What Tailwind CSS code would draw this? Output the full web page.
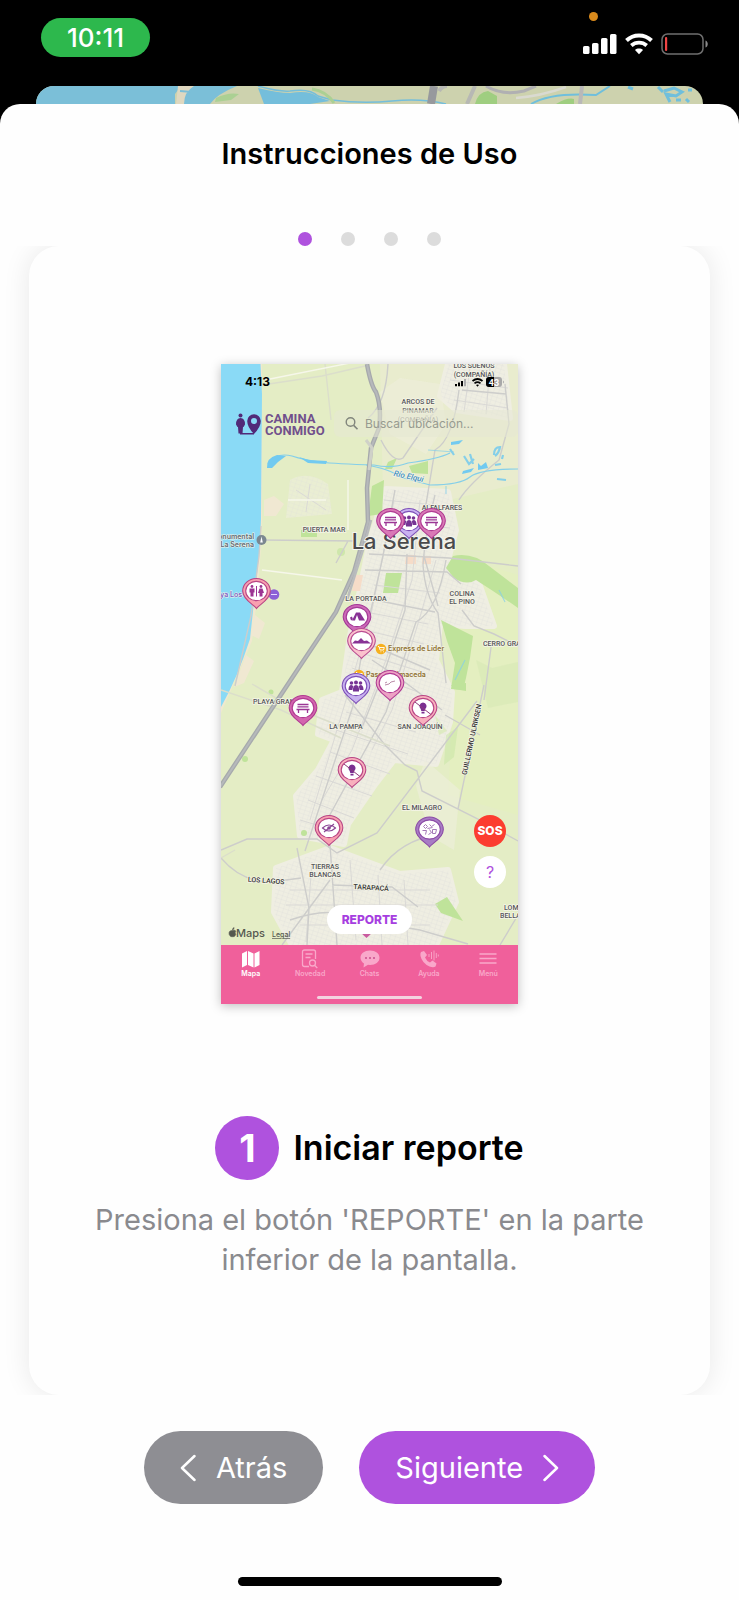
<!DOCTYPE html>
<html lang="es">
<head>
<meta charset="utf-8">
<meta name="viewport" content="width=device-width, initial-scale=1">
<title>Instrucciones de Uso</title>
<script src="https://cdn.jsdelivr.net/npm/@tailwindcss/browser@4"></script>
</head>
<body class="flex min-h-screen flex-col bg-black font-['Inter',sans-serif] text-black">

<!-- Status bar -->
<header class="relative flex h-[86px] shrink-0 items-start justify-between pt-[18px] pr-[30px] pl-[41px]">
  <div class="flex h-[39px] w-[109px] items-center justify-center rounded-full bg-[#2db84d] text-[26px] font-medium text-white">10:11</div>
  <div class="flex items-center gap-2 pt-[15px]">
    <svg class="h-[22px] w-[34px]" viewBox="0 0 34 22" fill="#fff" role="img" aria-label="Señal"><rect x="0" y="13" width="6.5" height="8" rx="1.6"/><rect x="9" y="10" width="6.5" height="11" rx="1.6"/><rect x="18" y="5" width="6.5" height="16" rx="1.6"/><rect x="27" y="1" width="6.5" height="20" rx="1.6"/></svg>
    <svg class="h-[22px] w-7" viewBox="0 0 28 22" fill="none" stroke="#fff" role="img" aria-label="Wi-Fi"><path d="M1.5 7.5C8.5.8 19.500.8 26.500 7.500" stroke-width="4"/><path d="M6.300 12.500C10.700 8.600 17.300 8.600 21.700 12.500" stroke-width="3.800"/><path d="M10 17c2.200-1.900 5.800-1.900 8 0l-4 4.200z" fill="#fff" stroke="none"/></svg>
    <svg class="h-[22px] w-12" viewBox="0 0 48 22" fill="none" role="img" aria-label="Batería baja"><rect x="1" y="1" width="41" height="20" rx="5.500" stroke="#6f6f6f" stroke-width="1.500"/><path d="M44.500 7.500c3 1 3 6 0 7z" fill="#8a8a8a"/><rect x="4" y="4" width="2.200" height="14" rx="1" fill="#ef4444"/></svg>
  </div>
  <span class="absolute top-3 right-[141px] size-[9px] rounded-full bg-[#d98a1c]"></span>
</header>

<!-- Top edge of the map behind the sheet -->
<div class="mx-9 h-9 shrink-0 overflow-hidden rounded-t-[18px] bg-[#cdd2ae]">
  <svg class="h-9 w-full" viewBox="0 0 667 36" preserveAspectRatio="none" fill="none" aria-hidden="true">
    <path d="M0 0H145L139 8V36H0z" fill="#7bbfd8"/>
    <path d="M142 0h16l-9 18h-9z" fill="#dfd8c0"/>
    <path d="M158 0h43q-20 8-27 18h-26q0-12 10-18z" fill="#7bbfd8"/>
    <path d="M144 5l12 1" stroke="#7bbfd8" stroke-width="2"/>
    <path d="M180 12q12-6 23-4l-8 6-16 2z" fill="#abd093"/>
    <path d="M222 0q22 6 32 5 20-3 28 5l14 4q30 4 60 1t54 3" stroke="#74bedb" stroke-width="1.500"/>
    <path d="M222 2q20 5 32 5 20-3 28 4l12 4-20 3h-46z" fill="#74bedb"/>
    <path d="M276 3q14 2 22 14" stroke="#abd093" stroke-width="3"/>
    <path d="M398 0l-3 18" stroke="#97999d" stroke-width="8"/>
    <path d="M403 5q3-5 8-5M439 0l-8 18" stroke="#b7b8b4" stroke-width="4"/>
    <path d="M439 18q3-12 13-13l9 5v8z" fill="#9fce80"/>
    <path d="M450 0q16 10 38 5l12-5" stroke="#b0b0b2" stroke-width="3"/><path d="M480 12q25-2 50-11" stroke="#dadad0" stroke-width="2.500"/>
    <path d="M495 18q20-12 65-9l14-9" stroke="#6fbfdc" stroke-width="2"/>
    <path d="M520 18q12-7 18-5v5z" fill="#9fce80"/><path d="M546 0l-2 18" stroke="#b9b8b8" stroke-width="4"/>
    <path d="M592 1l5 2M622 1l5 5M628 5l10-3 8 4-6 4-10-2 4 8M640 14h5M652 4h4M650 13l3 3" stroke="#6fbfdc" stroke-width="3"/>
  </svg>
</div>

<!-- Sheet -->
<main class="-mt-[18px] flex flex-1 flex-col rounded-t-[20px] bg-[#fefefe] pt-8">
  <h1 class="text-center text-[29px] leading-9 font-semibold">Instrucciones de Uso</h1>
  <div class="mt-[60px] flex justify-center gap-[29px]" aria-label="Paso 1 de 4">
    <span class="size-3.5 rounded-full bg-[#af52de]"></span>
    <span class="size-3.5 rounded-full bg-[#dcdcdc]"></span>
    <span class="size-3.5 rounded-full bg-[#dcdcdc]"></span>
    <span class="size-3.5 rounded-full bg-[#dcdcdc]"></span>
  </div>

  <div class="overflow-hidden px-[29px]">
    <section class="flex flex-col items-center rounded-[30px] bg-[#fefefe] px-10 pt-[118px] pb-[115px] shadow-[0_0_28px_rgba(0,0,0,0.09)]">

      <!-- App preview -->
      <div class="relative w-[297px] shadow-[0_2px_10px_rgba(0,0,0,0.25)]">
        <svg class="block w-full" viewBox="221 364 297 581" font-family="Roboto, sans-serif" role="img" aria-label="Mapa de La Serena">
          <defs>
            <pattern id="streets" width="5" height="4" patternUnits="userSpaceOnUse" patternTransform="rotate(18)"><path d="M0 0H5M0 0V4" stroke="#dedcd9" stroke-width=".6" fill="none"/></pattern>
            <g id="urban" stroke-width="6" stroke-linejoin="round">
              <path d="M448 364h56l6 54-54-8-16-14z"/>
              <path d="M386 489l62 3 8 38-8 30 32 26 14 40-28 0-26-2-4 36 16 32-2 30-14 42-42-4-20 26-26 38-4 20-44-8-4-40 22-26 16-30-16-6 4-34 20-8 8-56 10-46 10-50z"/>
              <path d="M276 868l54-20 70 26 48-4 8 32-20 43H292l-18-33z"/>
            </g>
            <g id="head"><path d="M0 17.500C-2 14-13.800 9-13.800 0A13.800 12.500 0 0 1 13.800 0C13.800 9 2 14 0 17.500z" stroke-width="1.100"/><ellipse rx="10.800" ry="9.600" fill="#fff" stroke-width="1.100"/></g>
            <g id="bench" stroke="#9b3695" stroke-width="1.300" fill="none"><path d="M-5.500-3.500h11M-5.500-1.200h11M-6.500 1.500h13M-4.500 1.500v3.500M4.500 1.500v3.500"/></g>
            <g id="people" fill="#763494"><circle cy="-3.500" r="2"/><circle cx="-4.500" cy="-3" r="1.800"/><circle cx="4.500" cy="-3" r="1.800"/><path d="M-3 5.500q-.5-6.500 3-6.500t3 6.500zM-7.500 4q0-5 3-5l1.800 1-1 4zM7.500 4q0-5-3-5l-1.800 1 1 4z"/></g>
            <g id="bulb"><path d="M0-5.500a3.700 3.700 0 0 1 2.300 6.500l-.6 2h-3.400l-.6-2a3.700 3.700 0 0 1 2.300-6.500zM-1.500 3.800h3v1.700h-3z" fill="#7a2f91"/><path d="M-8-6L8 6.500" stroke="#8d3b79" stroke-width="1"/></g>
          </defs>

          <rect x="221" y="364" width="297" height="581" fill="#e4edc5"/>
          <path d="M380 364h138v120l-65 15-70-5z" fill="#e9ecce"/>
          <path d="M455 555l63 20v240l-70-20 5-90z" fill="#e4efc0"/>
          <path d="M221 364h41v155q-1 50-10 122l-31 72z" fill="#f0e8cf"/>
          <path d="M221 364h39.500l1.500 30-1 125q-1 30-4 55l-7 65q-13 40-29 68z" fill="#8adaf6"/>
          <!-- built-up areas -->
          <use href="#urban" fill="#efeee2" stroke="#efeee2"/>
          <use href="#urban" fill="url(#streets)"/>
          <g fill="#eeeedc" opacity=".6"><path d="M380 392l20-14 40 6 6 40-20 30-36-20zM290 480q18-10 38 4l4 30-46 4zM425 760l35 30-6 60-24-14-14-50z"/></g>
          <path d="M290 480q18-10 38 4l4 30-46 4z" fill="url(#streets)" opacity=".7"/>
          <path d="M264 500l10-4 10 8-8 12h-12zM255 615l10 8-6 16-8-4zM246 655l8 6-10 22-10 4z" fill="#f0e8d2"/>
          <path d="M406 555h10v9h-11zM355 575h8l-3 16h-8zM422 556h9v8h-9z" fill="#f6dcc8"/>
          <!-- parks -->
          <g fill="#bfe39a">
            <path d="M453 556q20-4 36 10l29 22v20q-20-14-42-28-10 6-22-2l-8-10z"/>
            <path d="M441 620l32 16-3 22-4 20-3 12-12-1 4-26-8-22z"/><path d="M386 573h16l-4 20h-15z"/><path d="M372 486l12-6-2 34-14 2z"/><path d="M409 466l19-5v13l-16-1zM388 462l9-4-5 11h-7z"/>
            <path d="M435 904l12-7 16 24-22-8z"/><path d="M301 530h16v7h-16zM451 685l15-2v8l-12-2z"/><circle cx="341" cy="552" r="4" opacity=".6"/><circle cx="245" cy="759" r="3"/><circle cx="271" cy="692" r="2.500"/><circle cx="304" cy="833" r="3"/><path d="M446 735l12-8-4 30-10 8z" opacity=".4"/>
          </g>
          <path d="M435 715l12 16-8 4zM476 660l16 8 26-6v40l-30 6z" fill="#d8eab6" opacity=".7"/>
          <!-- fine streets -->
          <g fill="none" stroke="#dad9d6" stroke-width="1">
            <path d="M384 500l60 6M380 520l70 8M374 585l66 8M366 612l62 12M364 630l60 14M358 652l64 20M352 668l66 24M346 712l70 20M336 730l72 24M330 752l60 22M316 776l56 20M308 800l46 18M300 820l40 12"/>
            <path d="M394 500l-22 110-20 70-42 140M420 500l-8 80-26 80-34 90-30 50M436 560l-14 50-30 100-20 40M450 380l58 8M454 400l54 8M470 368l-6 44M490 366l-4 48"/>
            <path d="M290 890h140M286 905h152M300 925h130M312 862l-6 80M350 860l6 80M378 875l4 70M404 880l4 65M296 490l30 20M310 484l-4 28"/>
          </g>
          <!-- roads -->
          <g fill="none" stroke="#cdcdcb" stroke-width="1.400">
            <path d="M262 540l94 1M348 541l-12 22M261 526l-2 30-8 60-16 70"/>
            <path d="M388 364q-2 40-20 54M459 390q-6 50-24 60l-10 60M505 384l4 40-10 36q-30 24-40 40M381 440q12 24 22 18l34-50M462 390l44 4"/>
            <path d="M369 554l80 4 69 8M365 570l82 2 14 12M395 490l-12 66-20 90-10 60-48 145M407 554l-2 56-20 60-24 60M446 560q-8 50-30 62l-30 90-60 110M435 495q-10 40-12 70 2 30 15 48l8 70M424 556l14 50M375 600l60 12M372 660l30 20 40 30M350 636l80 34"/>
            <path d="M221 850l26-11h70l20 14 40-20 100-132M345 695l40 50 20 20 12 6 5 20 60 30 36 20M484 685l-26 124M462 610l12 16 20 8 24 12M492 640l-8 60M445 715l35 20"/>
            <path d="M297 848l12 60-2 37M329 830l8 115M330 880l-48 65M290 920q40-14 60-2l70 12 48 14M332 885l60 2 26 20M221 858q20 24 50 24l30-4M518 915l-18 30M380 870q20-30 60-36"/>
            <path d="M235 850l-14 8M221 690l60 20 60 28M252 684l38 22 100 40M262 385l60-9 43-10M325 364l6 56" stroke="#dbdecb"/>
          </g>
          <g fill="none" stroke="#f6f7ea" stroke-width="1.400"><path d="M265 380l100-20M288 500h38M348 480v50M262 570l80 10"/></g>
          <!-- rivers and lagoons -->
          <g fill="none" stroke="#85cfe9" stroke-width="1.200">
            <path d="M268 464q8-12 24-8 12 4 28 6t54 3q18 4 34-2 30-4 42-10"/><path d="M366 465q24 4 34 12l30 8q30 0 40-8t48-8"/><path d="M446 486v8M428 450l26 2M499 590l6 12M465 660l-10 20" opacity=".7"/>
            <path d="M494 455q0-8 6-8-1 6-5 9M450 449l4 6M464 456l5 8 5-5M470 454l3 10M502 459l1-4M495 465l6-1M497 479l9 1" stroke-width="2.200"/>
          </g>
          <path d="M267 468q-1-10 10-13l9 1-8 6-6 6zM299 457l10 3 18 1-1 3-18-1zM451 442l12-2-4 4-8 1zM463 471l11-3-3 4-9 2zM478 463l3 3 5-4 2 6-10 2z" fill="#72caf0"/>
          <!-- highway -->
          <path d="M367 364q4 22 9 28 6 16 3 36l-8 20-4 40 1 34-14 50-18 40-40 60-76 115" fill="none" stroke="#a6a9ac" stroke-width="4.500"/>
          <path d="M367 364q4 22 9 28 6 16 3 36l-8 20-4 40 1 34-14 50-18 40-40 60-76 115" fill="none" stroke="#b6b9bb" stroke-width="2"/>
          <path d="M371 520l-8 30-16 50" fill="none" stroke="#b9bbbd" stroke-width="2.500"/>
          <path d="M366 440l6 8-3 22" fill="none" stroke="#cfd1c8" stroke-width="3"/>

          <!-- place labels -->
          <g font-size="7" font-weight="500" fill="#55565a" text-anchor="middle" stroke="#f5f5e8" stroke-width="1.500" paint-order="stroke">
            <text x="474" y="368">LOS SUEÑOS</text><text x="474" y="377">(COMPAÑÍA)</text>
            <text x="418" y="404">ARCOS DE</text><text x="418" y="413" opacity=".8">PINAMAR</text><text x="418" y="422" opacity=".55">(COMPAÑÍA)</text>
            <text x="442" y="510">ALFALFARES</text><text x="324" y="532">PUERTA MAR</text>
            <text x="366" y="601">LA PORTADA</text><text x="462" y="596">COLINA</text><text x="462" y="604">EL PINO</text>
            <text x="483" y="646" text-anchor="start">CERRO GRANDE</text><text x="253" y="704" text-anchor="start">PLAYA GRANDE</text>
            <text x="346" y="729">LA PAMPA</text><text x="420" y="729">SAN JOAQUÍN</text><text x="422" y="810">EL MILAGRO</text>
            <text x="325" y="869">TIERRAS</text><text x="325" y="877">BLANCAS</text>
            <text x="504" y="910" text-anchor="start">LOMAS</text><text x="500" y="918" text-anchor="start">BELLA</text>
            <text transform="translate(474 740) rotate(-78)" fill="#333">GUILLERMO ULRIKSEN</text>
            <text transform="translate(266 883) rotate(4)" fill="#333">LOS LAGOS</text><text transform="translate(371 890) rotate(3)" fill="#333">TARAPACÁ</text>
            <text transform="translate(408 479) rotate(12)" fill="#3f8fc0" font-size="8" font-style="italic">Río Elqui</text>
          </g>
          <g font-family="Inter, sans-serif" font-size="7" font-weight="600" stroke="#f5f5e8" stroke-width="1" paint-order="stroke">
            <g fill="#5d6b78" text-anchor="end"><text x="254" y="539">Monumental</text><text x="254" y="547">La Serena</text></g>
            <text x="242" y="597" fill="#7a63c8" text-anchor="end">Playa Los</text>
            <text x="388" y="651" fill="#8e6f30">Express de Líder</text><text x="366" y="677" fill="#8e6f30">Paseo Balmaceda</text>
          </g>
          <text x="404" y="549" font-family="Inter, sans-serif" font-size="22" font-weight="500" fill="#4a4a4b" text-anchor="middle" stroke="#f5f5ee" stroke-width="2" paint-order="stroke">La Serena</text>
          <circle cx="261.500" cy="540" r="5" fill="#7b8790"/><path d="M261.500 536.500l1.300 6h-2.600z" fill="#fff"/>
          <circle cx="274" cy="594.500" r="5.300" fill="#8b5fd6"/><path d="M271 594.500h6" stroke="#e5d8ff"/>
          <g id="cart"><circle cx="381" cy="649" r="5.300" fill="#f6b01e"/><path d="M378 646.500h1l1 3.500h3.500l.8-2.500h-5M380.500 651.800h.8M383 651.800h.8" fill="none" stroke="#fff" stroke-width=".9"/></g>
          <use href="#cart" x="-22" y="26"/>

          <!-- pins -->
          <g transform="translate(409 521)"><use href="#head" fill="#c9b2f0" stroke="#7d50b8"/><use href="#people"/></g>
          <g transform="translate(390.500 521)"><use href="#head" fill="#d979b6" stroke="#b03a92"/><use href="#bench"/></g>
          <g transform="translate(431.500 521)"><use href="#head" fill="#d979b6" stroke="#b03a92"/><use href="#bench"/></g>
          <g transform="translate(256.500 591)"><use href="#head" fill="#f8a0b0" stroke="#b84585"/><g fill="#9c3593"><circle cx="-4.500" cy="-4.500" r="1.400"/><circle cx="4.500" cy="-4.500" r="1.400"/><path d="M-7-2.500h5v4h-1v4h-3v-4h-1zM3-2.500h3l1.500 4.500h-1.500v3.500h-3v-3.500h-1.500zM-.5-5h1v10.500h-1z"/></g></g>
          <g transform="translate(357 617)"><use href="#head" fill="#cd69b8" stroke="#a33a96"/><path fill-rule="evenodd" d="M-1-4.500h4l5 8h-13zM0-2l-2 5.500h4zM-7 .5l2-1 1 3-2 1z" fill="#883295"/></g>
          <g transform="translate(361.500 641)"><use href="#head" fill="#fbc2cd" stroke="#b94c91"/><path d="M-9.500 2.500l3-3 3 .5 3-3 3 3 3-.5 4 3z" fill="#883295"/></g>
          <g transform="translate(356 686)"><use href="#head" fill="#c9b2f0" stroke="#7d50b8"/><use href="#people"/></g>
          <g transform="translate(390 683)"><use href="#head" fill="#eda2c4" stroke="#b03a92"/><path d="M-5 2l4-1 2-2 4-1M-5 0l2-1" stroke="#b98aa8" fill="none"/></g>
          <g transform="translate(303 708)"><use href="#head" fill="#d365ae" stroke="#b03a92"/><use href="#bench"/></g>
          <g transform="translate(423 708)"><use href="#head" fill="#f8b0bd" stroke="#b84585"/><use href="#bulb"/></g>
          <g transform="translate(352 770)"><use href="#head" fill="#f8b0bd" stroke="#b84585"/><use href="#bulb"/></g>
          <g transform="translate(329 828)"><use href="#head" fill="#f8a0b0" stroke="#b84585"/><path d="M-6.500 0Q0-6 6.500 0 0 6-6.500 0zM-5 4L5-4" fill="none" stroke="#8a4595" stroke-width="1.100"/><circle r="1.800" fill="#8a4595"/></g>
          <g transform="translate(429.500 829.500)"><use href="#head" fill="#a77cc4" stroke="#8b4aa6"/><path d="M-6-3l2-2 2 2-2 2zM0-5l2 2 3-2M-7 1l4 0-1 4M0 0l2 3-3 2M3 0l4 0-1 4-3 0zM-2-1l5-1" fill="none" stroke="#a47ab8" stroke-width="1"/></g>
          <path d="M360 932h13l-6.500 6z" fill="#c95b9f"/>

          <!-- app header -->
          <rect x="334" y="410" width="184" height="27" rx="6" fill="#e5e8d3" opacity=".55"/>
          <circle cx="350.500" cy="422" r="4.300" fill="none" stroke="#81857c" stroke-width="1.400"/><path d="M353.700 425.400l3.800 3.800" stroke="#81857c" stroke-width="1.600"/>
          <text x="365" y="428" font-family="Inter, sans-serif" font-size="12" fill="#979b90">Buscar ubicación...</text>
          <g fill="#512a78"><circle cx="240.500" cy="415.500" r="2"/><path d="M236 424.500q0-6.500 4.500-6.500t4.500 6.500l-1.500 2.500h-.5l-.5 6.500h-4l-.5-6.500h-.5z"/><path fill-rule="evenodd" d="M254 434q-6.800-7-6.800-13a6.800 6.800 0 0 1 13.600 0q0 6-6.800 13zM254 418a3 3 0 1 0 0 6 3 3 0 0 0 0-6z"/><path d="M240 433h14v1.500h-14z"/></g>
          <g font-size="13" font-weight="700" fill="#71508c"><text x="265" y="423">CAMINA</text><text x="265" y="435">CONMIGO</text></g>
          <text x="245" y="386" font-family="Inter, sans-serif" font-size="12" font-weight="700">4:13</text>
          <path d="M455 384h2v2.300h-2zM458 382.500h2v3.800h-2zM461 381h2v5.300h-2z"/><path d="M464 379h2v7.300h-2z" fill="#aaa"/>
          <g fill="none" stroke="#000" stroke-width="1.700"><path d="M472.500 381q5-4 10 0M474.500 383.400q3-2.500 6 0"/></g><path d="M476 385l1.500 1.700 1.500-1.700q-1.500-1-3 0z"/>
          <rect x="486" y="377" width="16" height="10" rx="3" fill="#a9a9a9"/><path d="M489 377h5v10h-5a3 3 0 0 1-3-3v-4a3 3 0 0 1 3-3z"/><path d="M503 380.500q2 1.500 0 3z" fill="#aaa"/><text x="494" y="385.500" font-size="9" font-weight="700" fill="#fff" text-anchor="middle">43</text>

          <!-- attribution -->
          <path d="M232.500 930.500q3-1 3.300.8-1.500 1.600 0 3.200-1.300 3-3.300 2.200-2 .8-3.300-2.200-.9-4 3.300-4zm0-.5q0-2 1.600-2.400 0 2-1.600 2.400z" fill="#55584f" stroke="#55584f" stroke-width=".6"/>
          <text x="236" y="937" font-family="Inter, sans-serif" font-size="11" font-weight="500" fill="#55584f">Maps</text>
          <text x="272" y="937" font-family="Inter, sans-serif" font-size="7" font-weight="500" fill="#55584f" text-decoration="underline">Legal</text>
        </svg>

        <div class="absolute right-3 bottom-[116px] flex flex-col gap-[9px]">
          <button type="button" class="flex size-8 items-center justify-center rounded-full bg-[#fc3d30] text-[12px] font-extrabold text-white">SOS</button>
          <button type="button" aria-label="Ayuda" class="flex size-8 items-center justify-center rounded-full bg-white text-[16px] text-[#af52de]">?</button>
        </div>
        <div class="absolute inset-x-0 bottom-[70px] flex justify-center">
          <button type="button" class="h-[29px] rounded-full bg-white px-[15px] text-[12px] font-extrabold text-[#a63ee0]">REPORTE</button>
        </div>

        <nav class="flex h-[59px] flex-col justify-between bg-[#f0609b] pt-1 pb-[5px] text-[7px] leading-[10px] font-semibold text-[#f9a8ca]" aria-label="Secciones">
          <div class="flex">
            <button type="button" class="flex flex-1 flex-col items-center text-white"><svg class="h-5 w-6" viewBox="0 0 24 20" fill="#fff" aria-hidden="true"><path d="M3 4.500l5-2.500v14L3 18.500zM9 2l5.500 2.500v14L9 16zM15.500 4.500L20.500 2v14L15.500 18.500z"/></svg>Mapa</button>
            <button type="button" class="flex flex-1 flex-col items-center"><svg class="h-5 w-6" viewBox="0 0 24 20" fill="none" stroke="currentColor" stroke-width="1.300" aria-hidden="true"><path d="M11 17.500H6.500q-2 0-2-2V3q0-2 2-2h9q2 0 2 2v7M7.500 5h7M7.500 8.500h5"/><circle cx="14.500" cy="14" r="3"/><path d="M16.800 16.500l2.500 2.500"/></svg>Novedad</button>
            <button type="button" class="flex flex-1 flex-col items-center"><svg class="h-5 w-6" viewBox="0 0 24 20" fill="currentColor" aria-hidden="true"><path d="M12 1.500c5.500 0 9.500 3 9.500 7.200s-4 7.200-9.500 7.200l-2-.1L5.500 18.500l.5-4C4 13.200 2.500 11 2.500 8.700 2.500 4.500 6.500 1.500 12 1.500z"/><path d="M7 8h2v2H7zM11 8h2v2h-2zM15 8h2v2h-2z" fill="#d6659c"/></svg>Chats</button>
            <button type="button" class="flex flex-1 flex-col items-center"><svg class="h-5 w-6" viewBox="0 0 24 20" fill="currentColor" aria-hidden="true"><path d="M4 3l3-1 3 4-2 2.500q1.500 3.500 5 5l2.500-2 4 3-1 3q-2 1.500-6 0Q5 14 3.500 7q-.5-2.500.5-4z"/><path d="M12 5v3M14.500 3v7M17 1.500v10M19.300 4v5M21.300 5.500v2" stroke="currentColor" stroke-width=".9"/></svg>Ayuda</button>
            <button type="button" class="flex flex-1 flex-col items-center"><svg class="h-5 w-6" viewBox="0 0 24 20" stroke="currentColor" stroke-width="1.500" aria-hidden="true"><path d="M3.500 5h17M3.500 9.500h17M3.500 14h17"/></svg>Menú</button>
          </div>
          <span class="mx-auto h-[3px] w-[105px] rounded-full bg-[#f3d3e0]"></span>
        </nav>
      </div>

      <div class="mt-28 flex items-center gap-3.5">
        <span class="flex size-16 items-center justify-center rounded-full bg-[#af52de] text-[38px] font-bold text-white">1</span>
        <h2 class="text-[34px] leading-10 font-semibold">Iniciar reporte</h2>
      </div>
      <p class="mt-5 max-w-[570px] text-center text-[29px] leading-10 text-[#8a8a8e]">Presiona el botón 'REPORTE' en la parte inferior de la pantalla.</p>
    </section>
  </div>

  <div class="mt-9 flex justify-center gap-9">
    <button type="button" class="flex h-[73px] items-center gap-5 rounded-full bg-[#8e8e93] px-9 text-[29px] text-white">
      <svg class="h-7 w-4" viewBox="0 0 16 28" fill="none" stroke="#fff" stroke-width="2.500" stroke-linecap="round" stroke-linejoin="round" aria-hidden="true"><path d="M14.500 2L2 14l12.500 12"/></svg>Atrás
    </button>
    <button type="button" class="flex h-[73px] items-center gap-5 rounded-full bg-[#af52de] px-9 text-[29px] text-white">Siguiente
      <svg class="h-7 w-4" viewBox="0 0 16 28" fill="none" stroke="#fff" stroke-width="2.500" stroke-linecap="round" stroke-linejoin="round" aria-hidden="true"><path d="M1.500 2L14 14 1.500 26"/></svg>
    </button>
  </div>
  <div class="mx-auto mt-auto mb-3.5 h-[9px] w-[264px] rounded-full bg-black"></div>
</main>
</body>
</html>
